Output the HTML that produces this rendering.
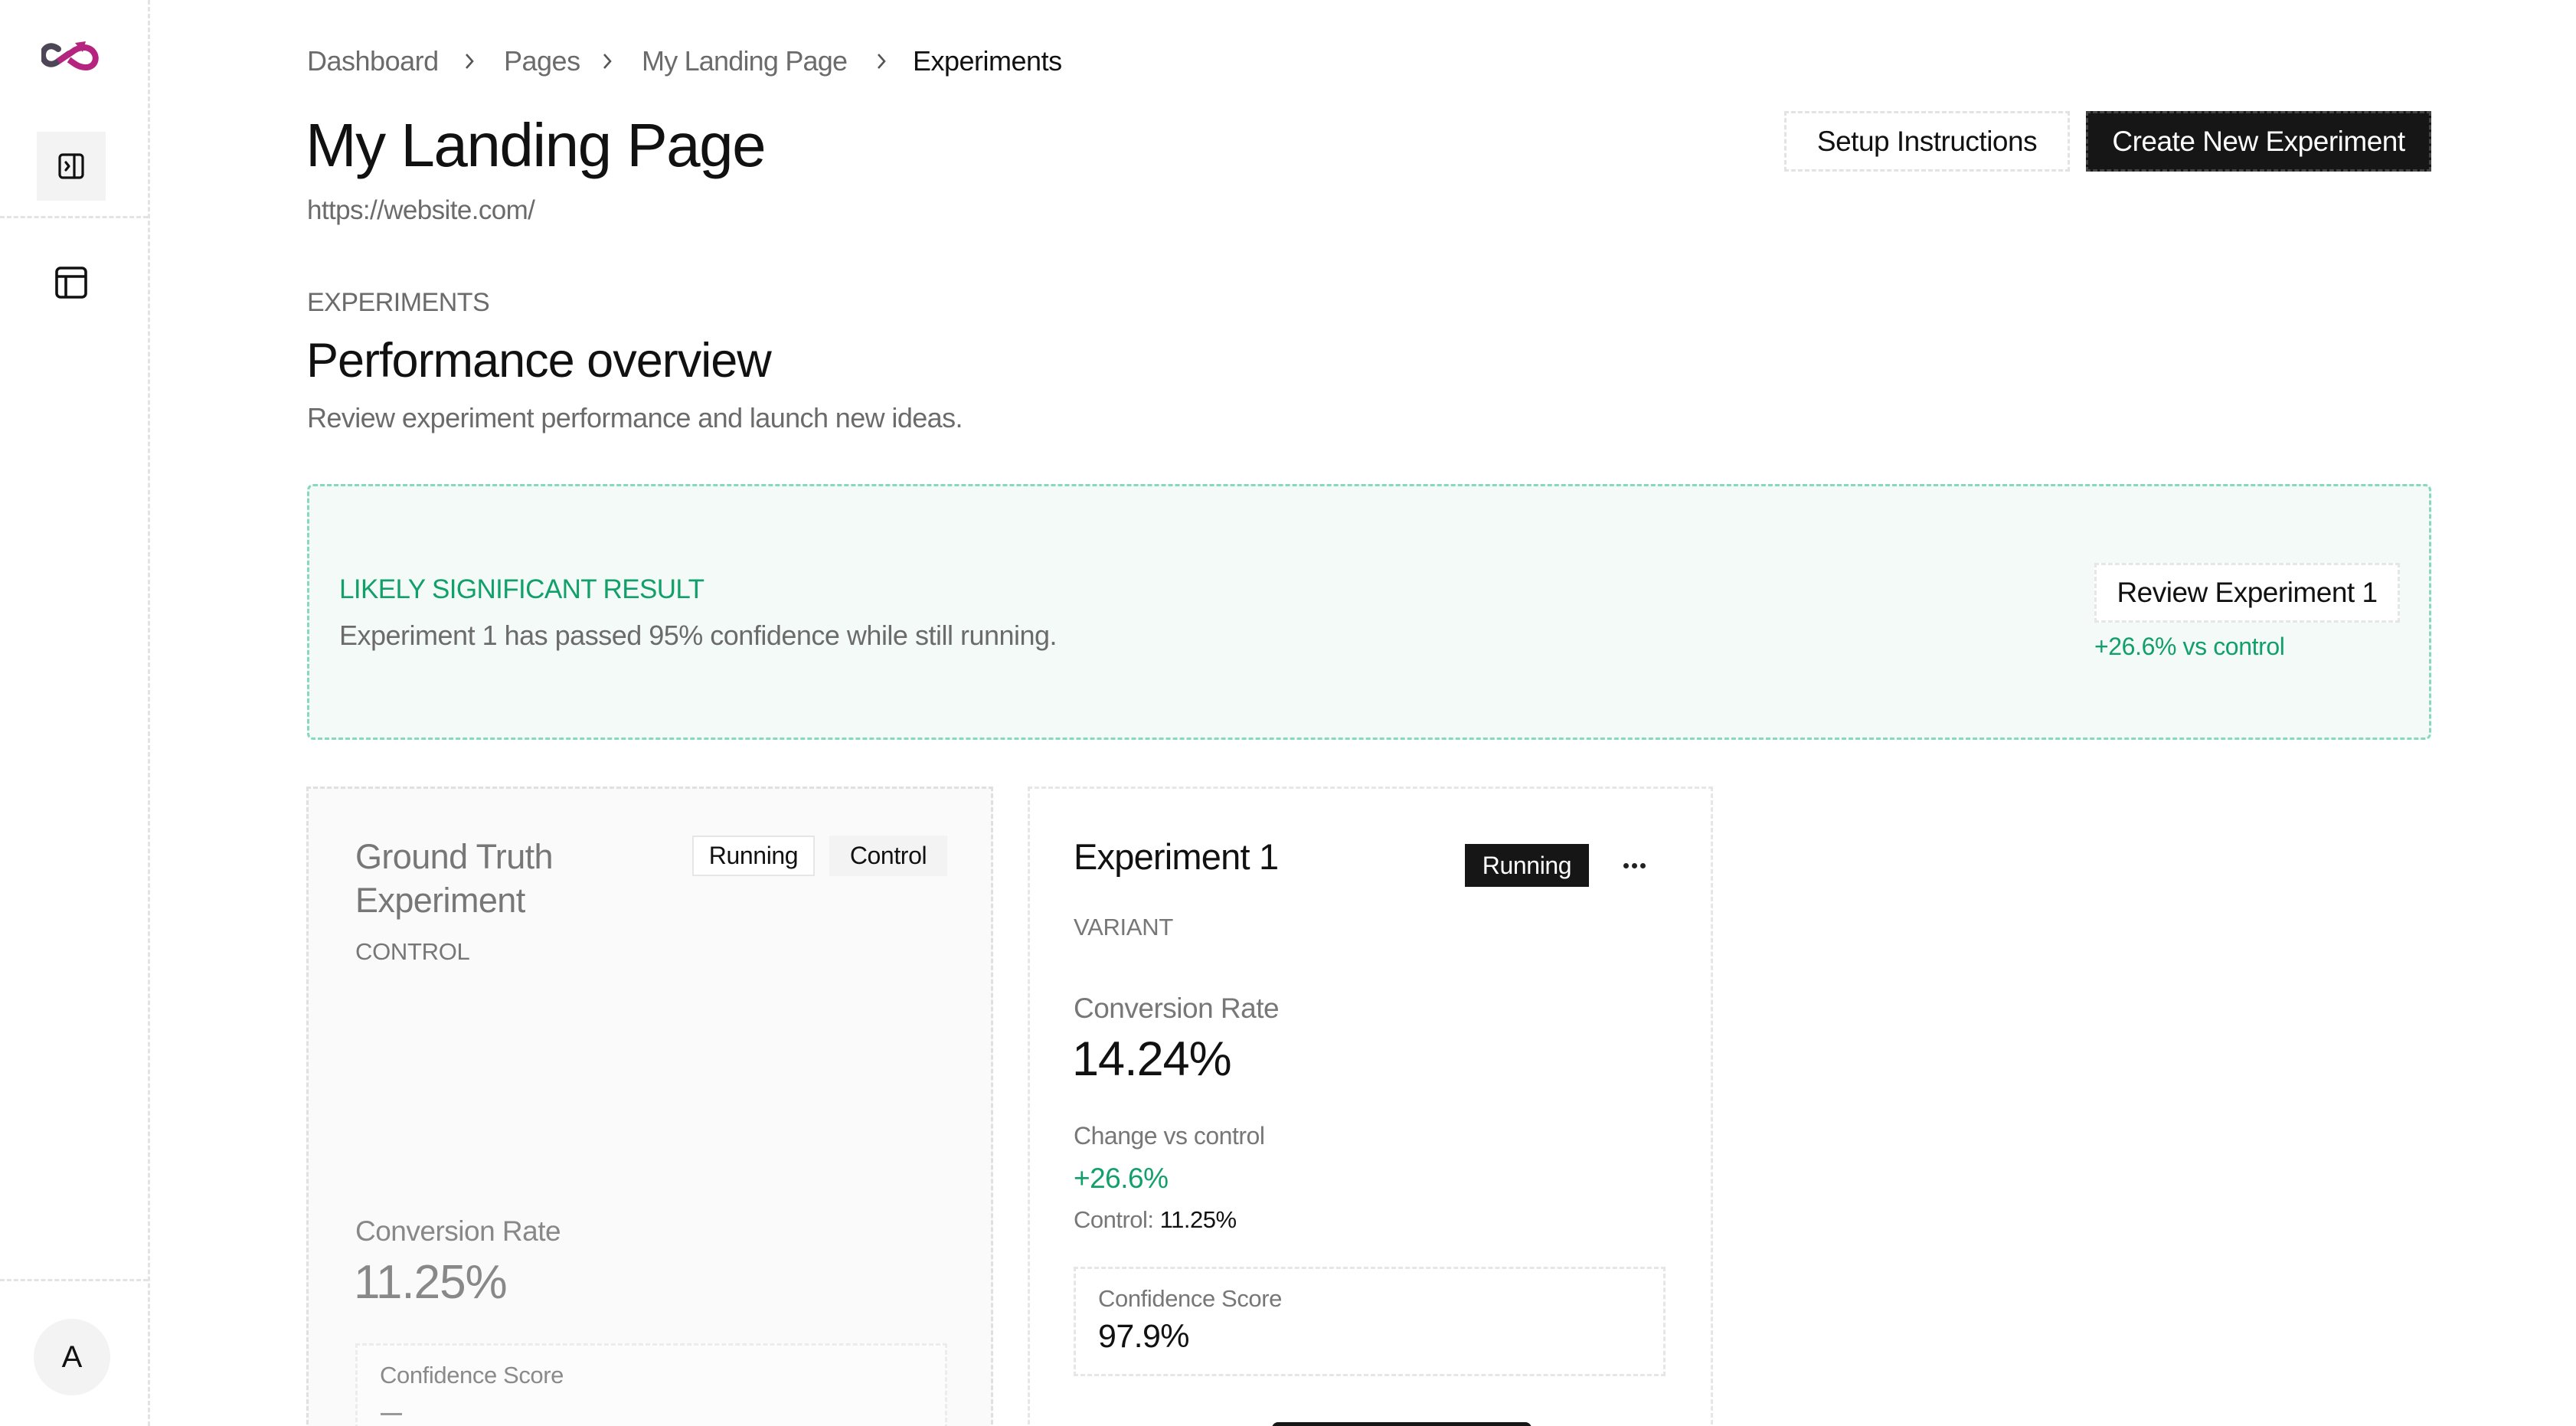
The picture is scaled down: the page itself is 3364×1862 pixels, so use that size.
<!DOCTYPE html>
<html style="width:3364px;height:1862px;overflow:hidden"><head><meta charset="utf-8"><style>
*{margin:0;padding:0;box-sizing:border-box}
html,body{width:3364px;height:1862px;overflow:hidden}
body{background:#fff;font-family:"Liberation Sans",sans-serif;position:relative;color:#111}
.a{position:absolute;white-space:nowrap}
.t{position:absolute;white-space:nowrap;line-height:1}
.g{color:#6b6b6b}
.gr{color:#12a06a}
</style></head><body>
<!-- sidebar -->
<div class="a" style="left:193px;top:0;width:0;height:1862px;border-left:3px dashed #e3e3e3"></div>
<div class="a" style="left:0;top:282px;width:193px;border-top:3px dashed #e3e3e3"></div>
<div class="a" style="left:0;top:1670px;width:193px;border-top:3px dashed #e3e3e3"></div>
<svg class="a" style="left:54px;top:52px" width="80" height="42" viewBox="0 0 80 42">
<path d="M22 12 C12 4 2 10 2 20 C2 30 12 36 22 28 L36 18" fill="none" stroke="#4d4657" stroke-width="8" stroke-linecap="round"/>
<path d="M22 28 L40 16 C50 8 62 8 68 16 C74 24 70 36 58 36 C48 36 42 30 36 26" fill="none" stroke="#b5247e" stroke-width="8"/>
<path d="M44 4 L58 2 L54 16 Z" fill="#b5247e"/>
</svg>
<div class="a" style="left:48px;top:172px;width:90px;height:90px;background:#f3f3f3"></div>
<svg class="a" style="left:75px;top:199px" width="36" height="36" viewBox="0 0 36 36" fill="none" stroke="#111" stroke-width="3.2" stroke-linejoin="round" stroke-linecap="round">
<rect x="3" y="3" width="30" height="30" rx="4"/><line x1="22" y1="3" x2="22" y2="33"/><path d="M11 13 L15 18 L11 23"/>
</svg>
<svg class="a" style="left:71px;top:347px" width="44" height="44" viewBox="0 0 44 44" fill="none" stroke="#111" stroke-width="3.6" stroke-linejoin="round">
<rect x="3" y="3" width="38" height="38" rx="5"/><line x1="3" y1="14" x2="41" y2="14"/><line x1="15" y1="14" x2="15" y2="41"/>
</svg>
<div class="a" style="left:44px;top:1722px;width:100px;height:100px;border-radius:50%;background:#f3f3f3;font-size:40px;line-height:100px;text-align:center">A</div>

<!-- header -->
<div class="t g" style="left:401px;top:62px;font-size:36px;letter-spacing:-0.5px">Dashboard</div>
<svg class="a" style="left:604px;top:66px" width="18" height="28" viewBox="0 0 18 28"><path d="M5 5 L13 14 L5 23" fill="none" stroke="#555" stroke-width="2.6"/></svg>
<div class="t g" style="left:658px;top:62px;font-size:36px;letter-spacing:-0.5px">Pages</div>
<svg class="a" style="left:784px;top:66px" width="18" height="28" viewBox="0 0 18 28"><path d="M5 5 L13 14 L5 23" fill="none" stroke="#555" stroke-width="2.6"/></svg>
<div class="t g" style="left:838px;top:62px;font-size:36px;letter-spacing:-0.8px">My Landing Page</div>
<svg class="a" style="left:1142px;top:66px" width="18" height="28" viewBox="0 0 18 28"><path d="M5 5 L13 14 L5 23" fill="none" stroke="#555" stroke-width="2.6"/></svg>
<div class="t" style="left:1192px;top:62px;font-size:36px;letter-spacing:-0.5px;color:#111">Experiments</div>

<div class="t" style="left:399px;top:150px;font-size:80px;font-weight:500;letter-spacing:-1.5px">My Landing Page</div>
<div class="t g" style="left:401px;top:257px;font-size:35px;letter-spacing:-0.6px">https://website.com/</div>
<div class="t g" style="left:401px;top:378px;font-size:34px;letter-spacing:-0.5px">EXPERIMENTS</div>
<div class="t" style="left:400px;top:440px;font-size:63px;font-weight:500;letter-spacing:-1px">Performance overview</div>
<div class="t g" style="left:401px;top:528px;font-size:36px;letter-spacing:-0.6px">Review experiment performance and launch new ideas.</div>

<div class="a" style="left:2330px;top:145px;width:373px;height:79px;border:3px dashed #e3e3e3;background:#fff;font-size:37px;line-height:73px;text-align:center;letter-spacing:-0.5px">Setup Instructions</div>
<div class="a" style="left:2724px;top:145px;width:451px;height:79px;border:3px dashed #444;background:#161616;color:#fff;font-size:37px;line-height:73px;text-align:center;letter-spacing:-0.5px">Create New Experiment</div>

<!-- banner -->
<div class="a" style="left:401px;top:632px;width:2774px;height:334px;border:3px dashed #86d9bb;border-radius:8px;background:#f4faf8"></div>
<div class="t gr" style="left:443px;top:752px;font-size:35px;font-weight:500;letter-spacing:-0.6px">LIKELY SIGNIFICANT RESULT</div>
<div class="t g" style="left:443px;top:812px;font-size:36px;letter-spacing:-0.5px">Experiment 1 has passed 95% confidence while still running.</div>
<div class="a" style="left:2735px;top:735px;width:399px;height:78px;border:3px dashed #e6e6e6;background:#fff;font-size:37px;line-height:72px;text-align:center;letter-spacing:-0.5px">Review Experiment 1</div>
<div class="t gr" style="left:2735px;top:828px;font-size:32px;letter-spacing:-0.4px">+26.6% vs control</div>

<!-- card 1 -->
<div class="a" style="left:400px;top:1027px;width:897px;height:860px;border:3px dashed #e0e0e0;background:#fafafa"></div>
<div class="a" style="left:464px;top:1090px;font-size:45px;line-height:57px;color:#777;letter-spacing:-0.6px">Ground Truth<br>Experiment</div>
<div class="a" style="left:904px;top:1091px;width:160px;height:53px;border:2px solid #e6e6e6;background:#fff;font-size:32px;line-height:49px;text-align:center;letter-spacing:-0.4px">Running</div>
<div class="a" style="left:1083px;top:1091px;width:154px;height:53px;background:#f3f3f3;font-size:32px;line-height:53px;text-align:center;letter-spacing:-0.4px">Control</div>
<div class="t" style="left:464px;top:1227px;font-size:31px;color:#777;letter-spacing:-0.3px">CONTROL</div>
<div class="t" style="left:464px;top:1589px;font-size:37px;color:#888;letter-spacing:-0.5px">Conversion Rate</div>
<div class="t" style="left:462px;top:1644px;font-size:62px;color:#888;letter-spacing:-1px">11.25%</div>
<div class="a" style="left:464px;top:1754px;width:773px;height:200px;border:3px dashed #ececec;background:#fcfcfc"></div>
<div class="t" style="left:496px;top:1780px;font-size:31px;color:#8a8a8a;letter-spacing:-0.4px">Confidence Score</div>
<div class="a" style="left:497px;top:1845px;width:28px;height:3px;background:#999"></div>

<!-- card 2 -->
<div class="a" style="left:1342px;top:1027px;width:895px;height:860px;border:3px dashed #e6e6e6;background:#fff"></div>
<div class="t" style="left:1402px;top:1095px;font-size:47px;letter-spacing:-0.8px">Experiment 1</div>
<div class="a" style="left:1913px;top:1102px;width:162px;height:56px;background:#161616;color:#fff;font-size:32px;line-height:56px;text-align:center;letter-spacing:-0.4px">Running</div>
<div class="a" style="left:2120px;top:1127px;width:7px;height:7px;border-radius:50%;background:#222;box-shadow:11px 0 0 #222,22px 0 0 #222"></div>
<div class="t" style="left:1402px;top:1195px;font-size:31px;color:#777;letter-spacing:-0.3px">VARIANT</div>
<div class="t" style="left:1402px;top:1298px;font-size:37px;color:#777;letter-spacing:-0.5px">Conversion Rate</div>
<div class="t" style="left:1400px;top:1352px;font-size:63px;font-weight:500;letter-spacing:-1px">14.24%</div>
<div class="t" style="left:1402px;top:1467px;font-size:32px;color:#777;letter-spacing:-0.5px">Change vs control</div>
<div class="t gr" style="left:1402px;top:1520px;font-size:37px;letter-spacing:-0.5px">+26.6%</div>
<div class="t" style="left:1402px;top:1577px;font-size:31px;color:#777;letter-spacing:-0.5px">Control: <span style="color:#111">11.25%</span></div>
<div class="a" style="left:1402px;top:1654px;width:773px;height:143px;border:3px dashed #e6e6e6"></div>
<div class="t" style="left:1434px;top:1680px;font-size:31px;color:#777;letter-spacing:-0.4px">Confidence Score</div>
<div class="t" style="left:1434px;top:1724px;font-size:43px;letter-spacing:-0.6px">97.9%</div>
<div class="a" style="left:1661px;top:1857px;width:339px;height:20px;border-radius:8px;background:#161616"></div>
</body></html>
